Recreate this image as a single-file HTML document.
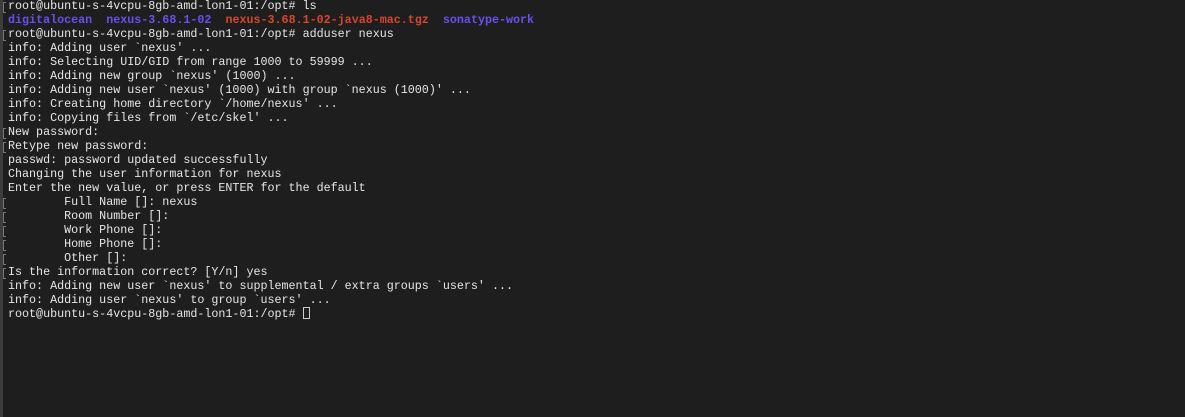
<!DOCTYPE html>
<html><head><meta charset="utf-8"><style>
html,body{margin:0;padding:0;width:1185px;height:417px;overflow:hidden;background:#1e1e1e;}
.strip{position:absolute;left:0;top:0;width:3px;height:417px;background:#3c3c3c;}
pre{position:absolute;left:8px;top:-1px;margin:0;font-family:"Liberation Mono",monospace;font-size:11.7px;line-height:14px;color:#e6e6e6;}
.b{color:#6a4ff0;font-weight:bold}
.r{color:#d8452f;font-weight:bold}
.m{position:absolute;left:3px;width:3px;height:11px;border-left:1px solid #777;border-top:1px solid #777;border-bottom:1px solid #777;box-sizing:border-box;}
.cur{display:inline-block;width:7px;height:12px;border:1px solid #ccc;box-sizing:border-box;vertical-align:-2px;}
</style></head><body>
<div class="strip"></div>
<div class="m" style="top:2px"></div>
<div class="m" style="top:30px"></div>
<div class="m" style="top:128px"></div>
<div class="m" style="top:142px"></div>
<div class="m" style="top:198px"></div>
<div class="m" style="top:212px"></div>
<div class="m" style="top:226px"></div>
<div class="m" style="top:240px"></div>
<div class="m" style="top:254px"></div>
<div class="m" style="top:268px"></div>
<pre>root@ubuntu-s-4vcpu-8gb-amd-lon1-01:/opt# ls
<span class="b">digitalocean</span>  <span class="b">nexus-3.68.1-02</span>  <span class="r">nexus-3.68.1-02-java8-mac.tgz</span>  <span class="b">sonatype-work</span>
root@ubuntu-s-4vcpu-8gb-amd-lon1-01:/opt# adduser nexus
info: Adding user `nexus' ...
info: Selecting UID/GID from range 1000 to 59999 ...
info: Adding new group `nexus' (1000) ...
info: Adding new user `nexus' (1000) with group `nexus (1000)' ...
info: Creating home directory `/home/nexus' ...
info: Copying files from `/etc/skel' ...
New password:
Retype new password:
passwd: password updated successfully
Changing the user information for nexus
Enter the new value, or press ENTER for the default
        Full Name []: nexus
        Room Number []:
        Work Phone []:
        Home Phone []:
        Other []:
Is the information correct? [Y/n] yes
info: Adding new user `nexus' to supplemental / extra groups `users' ...
info: Adding user `nexus' to group `users' ...
root@ubuntu-s-4vcpu-8gb-amd-lon1-01:/opt# <span class="cur"></span></pre>
</body></html>
